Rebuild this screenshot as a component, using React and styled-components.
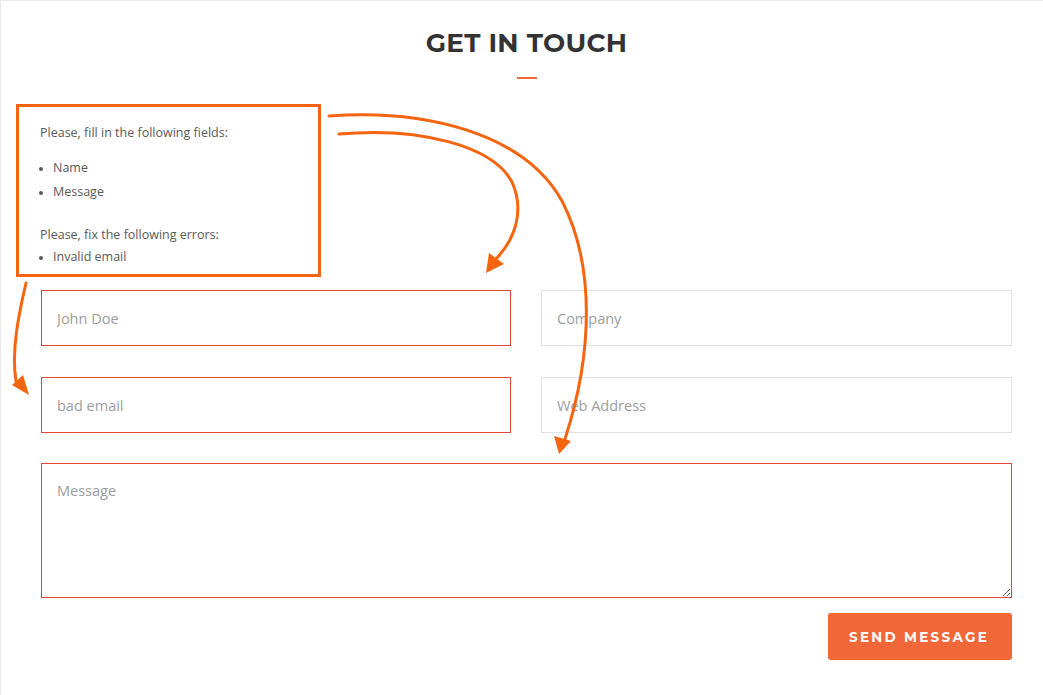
import React from "react";
import styled, { createGlobalStyle } from "styled-components";

const Global = createGlobalStyle`
  html, body { margin: 0; padding: 0; background: #fff; }
  body { font-family: "Open Sans", "Liberation Sans", sans-serif; color: #555; }
  * { box-sizing: border-box; }
`;

const Page = styled.div`
  position: relative;
  width: 1043px;
  height: 695px;
  border-top: 1px solid #e9e9e9;
  border-left: 1px solid #e9e9e9;
  overflow: hidden;
`;

const Header = styled.header`
  display: flex;
  flex-direction: column;
  align-items: center;
  padding: 27px 0 0 9px;
`;

const Title = styled.h2`
  margin: 0;
  font-family: "Montserrat", "Open Sans", sans-serif;
  font-weight: 700;
  font-size: 26.3px;
  line-height: 30px;
  letter-spacing: 0.3px;
  color: #333;
`;

const Divider = styled.span`
  display: block;
  width: 20px;
  height: 2px;
  margin-top: 19px;
  background: #f26738;
`;

const Summary = styled.div`
  width: 305px;
  margin: 25px 0 0 15px;
  padding: 15px 16px 6px 21px;
  border: 3px solid #f5650f;
  font-size: 12.5px;
  color: #5a5a5a;
`;

const SummaryText = styled.p`
  margin: ${(p) => (p.$spaced ? "20px 0 0" : "0")};
  line-height: 22px;
`;

const List = styled.ul`
  margin: ${(p) => (p.$tight ? "0" : "12px 0 0")};
  padding-left: 13px;
  li {
    line-height: ${(p) => (p.$tight ? "22px" : "24px")};
  }
  li::marker { font-size: 10px; }
`;

const Form = styled.form`
  display: grid;
  grid-template-columns: 470px 471px;
  column-gap: 30px;
  row-gap: 31px;
  margin: 13px 0 0 40px;
  width: 971px;
`;

const Input = styled.input`
  height: 56px;
  width: 100%;
  padding: 0 15px;
  border: 1px solid ${(p) => (p.$error ? "#e5443f" : "#e2e2e2")};
  font-family: "Open Sans", sans-serif;
  font-size: 14.5px;
  color: #555;
  outline: none;
  &::placeholder { color: #9d9d9d; }
`;

const TextArea = styled.textarea`
  grid-column: 1 / -1;
  height: 135px;
  margin-top: -1px;
  padding: 17px 15px;
  border: 1px solid ${(p) => (p.$error ? "#e5443f" : "#e2e2e2")};
  font-family: "Open Sans", sans-serif;
  font-size: 14.5px;
  color: #555;
  outline: none;
  &::placeholder { color: #9d9d9d; }
`;

const Actions = styled.div`
  grid-column: 1 / -1;
  display: flex;
  justify-content: flex-end;
  margin-top: -16px;
`;

const Button = styled.button`
  width: 184px;
  height: 47px;
  border: none;
  border-radius: 3px;
  background: #f26738;
  color: #fff;
  font-family: "Montserrat", "Open Sans", sans-serif;
  font-weight: 700;
  font-size: 13.5px;
  letter-spacing: 2.3px;
  padding-left: 4px;
  cursor: pointer;
`;

const Overlay = styled.svg`
  position: absolute;
  top: 0;
  left: 0;
  pointer-events: none;
`;

const ARROW = "#f5650f";

export default function App() {
  return (
    <>
      <Global />
      <Page>
        <Header>
          <Title>GET IN TOUCH</Title>
          <Divider />
        </Header>
        <Summary>
          <SummaryText>Please, fill in the following fields:</SummaryText>
          <List>
            <li>Name</li>
            <li>Message</li>
          </List>
          <SummaryText $spaced>Please, fix the following errors:</SummaryText>
          <List $tight>
            <li>Invalid email</li>
          </List>
        </Summary>
        <Form onSubmit={(e) => e.preventDefault()}>
          <Input $error placeholder="John Doe" />
          <Input placeholder="Company" />
          <Input $error placeholder="bad email" />
          <Input placeholder="Web Address" />
          <TextArea $error placeholder="Message" />
          <Actions>
            <Button type="submit">SEND MESSAGE</Button>
          </Actions>
        </Form>
        <Overlay width="1043" height="695" viewBox="0 0 1043 695">
          <g fill="none" stroke={ARROW} strokeWidth="3" strokeLinecap="round">
            <path d="M338 133 C 420 126, 492 145, 511 181 C 524 210, 514 238, 495 258" />
            <path d="M328 115 C 420 108, 522 130, 561 200 C 594 264, 592 352, 564 438" />
            <path d="M25 282 C 18 312, 10 350, 15 380" />
          </g>
          <g fill={ARROW}>
            <polygon points="485,272 488,252 503,263" />
            <polygon points="558,453 553,435 570,440" />
            <polygon points="28,394 11,384 22,374" />
          </g>
        </Overlay>
      </Page>
    </>
  );
}
